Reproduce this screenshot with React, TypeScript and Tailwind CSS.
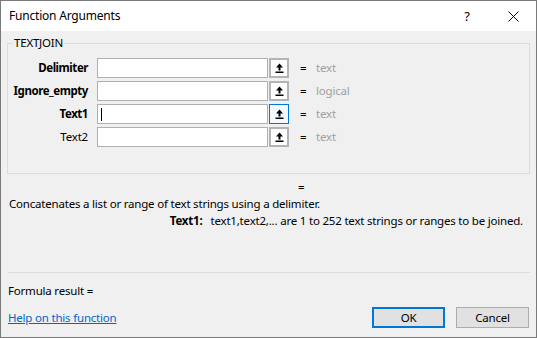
import React from "react";

const font = { fontFamily: '"Segoe UI", "Noto Sans", "Open Sans", sans-serif' };

function UpIcon() {
  return (
    <svg width="9" height="10" viewBox="0 0 9 10">
      <path d="M4.5 0.5 L8 4.5 L5.5 4.5 L5.5 7.5 L3.5 7.5 L3.5 4.5 L1 4.5 Z" fill="#000" />
      <rect x="0.5" y="8.5" width="8" height="1.5" fill="#000" />
    </svg>
  );
}

type Row = { label: string; bold: boolean; value: string; focused?: boolean };

const rows: Row[] = [
  { label: "Delimiter", bold: true, value: "text" },
  { label: "Ignore_empty", bold: true, value: "logical" },
  { label: "Text1", bold: true, value: "text", focused: true },
  { label: "Text2", bold: false, value: "text" },
];

export default function App() {
  return (
    <div
      className="w-[537px] h-[338px] border border-[#7a7a7a] bg-[#f0f0f0] flex flex-col text-[11.5px] tracking-[-0.2px] text-black overflow-hidden"
      style={font}
    >
      {/* Title bar */}
      <div className="h-[30px] bg-white flex items-center shrink-0">
        <div className="pl-[8px] flex-1 text-[12px] tracking-[-0.2px] leading-none">Function Arguments</div>
        <div className="w-[46px] flex justify-center text-[13px] leading-none">?</div>
        <div className="w-[46px] flex justify-center">
          <svg width="11" height="11" viewBox="0 0 11 11">
            <path d="M0.5 0.5 L10.5 10.5 M10.5 0.5 L0.5 10.5" stroke="#000" strokeWidth="1" />
          </svg>
        </div>
      </div>

      {/* Body */}
      <div className="flex-1 flex flex-col px-[6px]">
        <fieldset className="mt-[5px] h-[138px] border border-[#dcdcdc] px-[5px]">
          <legend className="px-[1px] leading-[14px]">TEXTJOIN</legend>
          <div className="flex flex-col gap-[3px] mt-[8px]">
            {rows.map((r) => (
              <div key={r.label} className="flex items-center h-[20px]">
                <div
                  className={`w-[75px] text-right leading-none whitespace-nowrap ${
                    r.bold ? "font-bold tracking-[-0.45px]" : ""
                  }`}
                >
                  {r.label}
                </div>
                <div className="ml-[9px] w-[171px] h-[20px] bg-white border border-[#b0b0b0] flex items-center pl-[3px]">
                  {r.focused && <div className="w-[1px] h-[13px] bg-black" />}
                </div>
                <div
                  className={`ml-[1px] w-[20px] h-[20px] flex items-center justify-center ${
                    r.focused
                      ? "border border-[#0078d7] bg-[#f4f9fd]"
                      : "border-2 border-[#b4b4b4] bg-white"
                  }`}
                >
                  <UpIcon />
                </div>
                <div className="ml-[11px] w-[16px] leading-none">=</div>
                <div className="text-[#a0a0a0] leading-none">{r.value}</div>
              </div>
            ))}
          </div>
        </fieldset>

        <div className="mt-[6px] pl-[291px] leading-[14px]">=</div>
        <div className="mt-[2px] pl-[2px] leading-[16px]">
          Concatenates a list or range of text strings using a delimiter.
        </div>
        <div className="mt-[1px] flex justify-end pr-[7px] leading-[16px]">
          <span className="font-bold">Text1:</span>
          <span className="ml-[8px]">text1,text2,... are 1 to 252 text strings or ranges to be joined.</span>
        </div>

        <div className="mt-[43px] ml-[1px] h-[1px] bg-[#dcdcdc]" />

        <div className="mt-[11px] pl-[1px] leading-[14px]">Formula result =</div>

        <div className="mt-[9px] flex items-center">
          <a className="pl-[1px] text-[#0066cc] underline leading-[14px] flex-1" href="#">
            Help on this function
          </a>
          <button className="w-[73px] h-[21px] border-2 border-[#0078d7] bg-[#e1e1e1] leading-none">
            OK
          </button>
          <button className="ml-[11px] mr-[1px] w-[73px] h-[21px] border border-[#adadad] bg-[#e1e1e1] leading-none">
            Cancel
          </button>
        </div>
      </div>
    </div>
  );
}
